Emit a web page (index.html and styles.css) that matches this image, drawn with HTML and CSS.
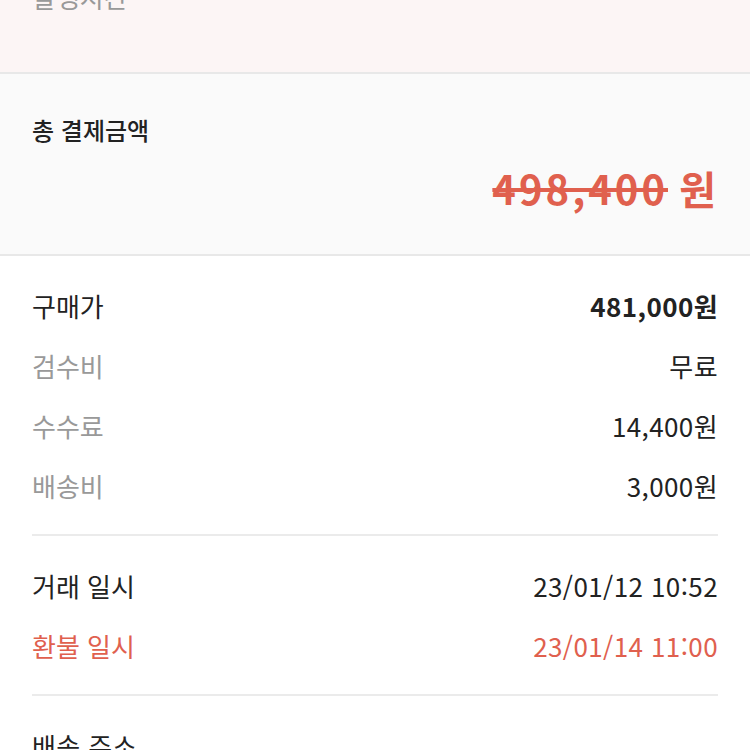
FILE: index.html
```html
<!DOCTYPE html>
<html lang="ko">
<head>
    <meta charset="UTF-8">
    <meta name="viewport" content="width=device-width, initial-scale=1.0">
    <title>구매 내역</title>
    <link rel="stylesheet" href="styles.css">
</head>
<body>
    <div class="notice">
        <p class="notice-text">발생시간</p>
    </div>

    <div class="summary">
        <h2 class="summary-title">총 결제금액</h2>
        <p class="summary-price"><s>498,400</s> 원</p>
    </div>

    <div class="details">
        <div class="group">
            <div class="row">
                <span>구매가</span>
                <span class="strong">481,000원</span>
            </div>
            <div class="row">
                <span class="muted">검수비</span>
                <span>무료</span>
            </div>
            <div class="row">
                <span class="muted">수수료</span>
                <span>14,400원</span>
            </div>
            <div class="row">
                <span class="muted">배송비</span>
                <span>3,000원</span>
            </div>
        </div>

        <div class="group">
            <div class="row">
                <span>거래 일시</span>
                <span>23/01/12 10:52</span>
            </div>
            <div class="row refund">
                <span>환불 일시</span>
                <span>23/01/14 11:00</span>
            </div>
        </div>

        <div class="group">
            <div class="row">
                <span>배송 주소</span>
            </div>
        </div>
    </div>
</body>
</html>
```

FILE: styles.css
```css
body {
    margin: 0;
    font-family: "Noto Sans CJK KR", "Noto Sans", sans-serif;
    color: #222;
    background: #fff;
}
.notice {
    height: 72px;
    background-color: #fcf5f5;
    border-bottom: 2px solid #e8e8e8;
    overflow: hidden;
}
.notice-text {
    margin: -22px 0 0 32px;
    font-size: 26px;
    color: #999;
}
.summary {
    background-color: #fafafa;
    padding: 38px 34px 38px 32px;
    border-bottom: 2px solid #e8e8e8;
}
.summary-title {
    margin: 0;
    font-size: 24px;
    font-weight: 500;
    line-height: 36px;
}
.summary-price {
    margin: 12px 0 0;
    text-align: right;
    font-size: 40px;
    font-weight: 700;
    line-height: 56px;
    color: #e0604e;
}
.summary-price s {
    letter-spacing: 3px;
    text-decoration-thickness: 4px;
}
.details {
    padding: 0 32px;
}
.group {
    padding: 19px 0;
    border-bottom: 2px solid #ebebeb;
}
.row {
    display: flex;
    justify-content: space-between;
    align-items: center;
    height: 60px;
    font-size: 26px;
}
.row span:last-child {
    letter-spacing: 0.4px;
}
.muted {
    color: #999;
}
.strong {
    font-weight: 700;
}
.refund {
    color: #e0604e;
}
```
